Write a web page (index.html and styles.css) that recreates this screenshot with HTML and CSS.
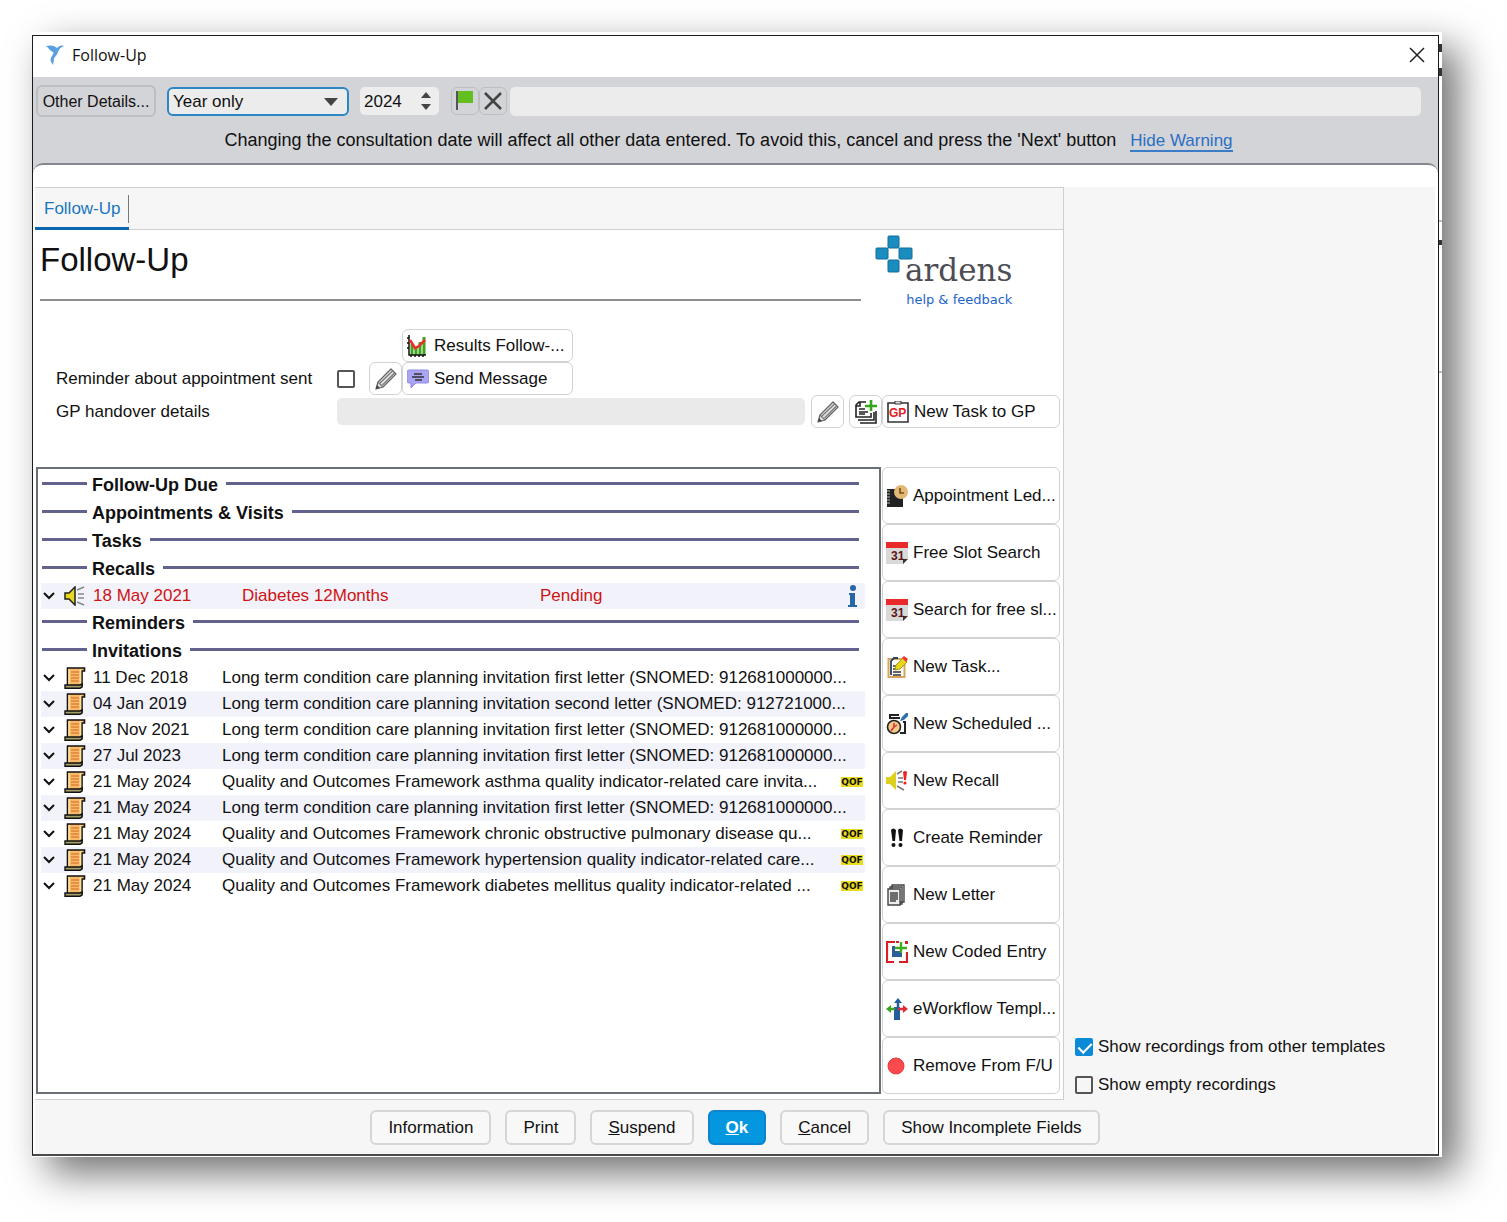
FILE: index.html
```html
<!DOCTYPE html>
<html lang="en">
<head>
<meta charset="utf-8">
<title>Follow-Up</title>
<link rel="stylesheet" href="styles.css">
</head>
<body>
<svg class="defs" aria-hidden="true">
  <symbol id="pencil" viewBox="0 0 24 24"><path d="M2 22l2-7L17 2l5 5L9 20z" fill="#e2e2e2" stroke="#666" stroke-width="1.3" stroke-linejoin="round"/><path d="M6 16L18.500 4M8.500 18L20.500 6M4 15l5 5" stroke="#777" stroke-width="1.1" fill="none"/><path d="M2 22l1-4 3 3z" fill="#444"/></symbol>
  <symbol id="chevron" viewBox="0 0 12 8"><path d="M1 1l5 5 5-5" fill="none" stroke="#111" stroke-width="2"/></symbol>
  <symbol id="scroll" viewBox="0 0 22 22"><path d="M3.500 1h17v3H18v15H3.500z" fill="#f9b96b" stroke="#111" stroke-width="1.600"/><path d="M5 2v16M16.500 2v16" stroke="#fbe29a" stroke-width="1.600"/><path d="M7 5h8M7 8h8M7 11h8M7 14h8" stroke="#e08238" stroke-width="1.300"/><path d="M1 18h15l2-1v3l-2 1.200H1z" fill="#a59f68" stroke="#111" stroke-width="1.400"/></symbol>
</svg>

<div class="shot">
<main class="window">
  <header class="titlebar">
    <svg width="18" height="20" viewBox="0 0 18 20"><path d="M0 1c4-1 8-1 11 2 2-2 4-3 7-2-3 1-5 3-6 6-1 4-4 5-4 7l-1 6c-3-4-3-6-1-9 1-2 2-3 1-4C4 6 3 3 0 1z" fill="#5a9fdf"/></svg>
    <span class="titlebar-text">Follow-Up</span>
    <button class="close" aria-label="Close"><svg width="16" height="16" viewBox="0 0 16 16"><path d="M1 1l14 14M15 1L1 15" stroke="#222" stroke-width="1.500"/></svg></button>
  </header>

  <section class="toolbar">
    <div class="toolbar-row">
      <button class="details">Other Details...</button>
      <div class="select-box">
        <select aria-label="Date precision"><option>Year only</option></select>
        <svg class="select-arrow" width="14" height="8" viewBox="0 0 14 8"><path d="M0 0h14L7 8z" fill="#444"/></svg>
      </div>
      <div class="spinner">
        <input type="text" value="2024" aria-label="Year">
        <span class="steps">
          <button aria-label="Next year"><svg width="10" height="6" viewBox="0 0 10 6"><path d="M0 6h10L5 0z" fill="#444"/></svg></button>
          <button aria-label="Previous year"><svg width="10" height="6" viewBox="0 0 10 6"><path d="M0 0h10L5 6z" fill="#444"/></svg></button>
        </span>
      </div>
      <div class="pair">
        <button class="tool" aria-label="Flag"><svg width="18" height="20" viewBox="0 0 18 20"><path d="M1 0v19" stroke="#555" stroke-width="2"/><path d="M2 0h15v12H2z" fill="#63bf1f"/></svg></button>
        <button class="tool" aria-label="Clear"><svg width="18" height="18" viewBox="0 0 18 18"><path d="M1 1l16 16M17 1L1 17" stroke="#444" stroke-width="2.500"/></svg></button>
      </div>
      <input class="comment" type="text" aria-label="Details">
    </div>
    <p class="warning">Changing the consultation date will affect all other data entered. To avoid this, cancel and press the 'Next' button <a href="#">Hide Warning</a></p>
  </section>

  <div class="body">
    <div class="columns">
      <section class="panel">
        <nav class="tabs"><a class="tab" href="#">Follow-Up</a></nav>
        <div class="heading">
          <h1>Follow-Up</h1>
          <a class="brand" href="#">
            <span class="brand-row">
              <svg width="38" height="38" viewBox="0 0 38 38" fill="#1a8dc0" stroke="#116d97"><rect x="13" y="1" width="11" height="12" rx="1"/><rect x="13" y="25" width="11" height="12" rx="1"/><rect x="1" y="13" width="12" height="11" rx="1"/><rect x="24" y="13" width="13" height="11" rx="1"/></svg>
              <span class="brand-name">ardens</span>
            </span>
            <span class="brand-help">help &amp; feedback</span>
          </a>
        </div>

        <div class="form">
          <div class="form-row results">
            <button class="btn medium"><svg width="22" height="22" viewBox="0 0 22 22"><path d="M5 20V9M9 20v-8M13 20V7M17 20V2" stroke="#3ea51d" stroke-width="3"/><path d="M2 0v20h17M4 20v2M8 20v2M12 20v2M16 20v2M0 3h2M0 8h2M0 13h2" stroke="#111" stroke-width="1.500" fill="none"/><path d="M3 5l5 8 4-2 6-6" stroke="#ee2b2b" stroke-width="2.500" fill="none"/></svg>Results Follow-...</button>
          </div>
          <div class="form-row">
            <label class="label" for="sent">Reminder about appointment sent</label>
            <input class="check" type="checkbox" id="sent">
            <button class="btn square spaced" aria-label="Edit reminder"><svg width="24" height="24"><use href="#pencil"/></svg></button>
            <button class="btn medium"><svg width="22" height="22" viewBox="0 0 22 22"><path d="M2 2h18q2 0 2 2v9q0 2-2 2H9l-5 5v-5H2q-2 0-2-2V4q0-2 2-2z" fill="#a9a5f2" stroke="#8e89e6"/><path d="M7 6h8M5 9h12M8 12h7" stroke="#333" stroke-width="1.300"/></svg>Send Message</button>
          </div>
          <div class="form-row">
            <label class="label" for="handover">GP handover details</label>
            <input class="field" type="text" id="handover">
            <button class="btn square" aria-label="Edit handover"><svg width="24" height="24"><use href="#pencil"/></svg></button>
            <button class="btn square near" aria-label="Add note"><svg width="24" height="24" viewBox="0 0 24 24" fill="none" stroke="#222" stroke-width="1.600"><path d="M12 2H5L2 5v12h15v-4M4 20h16v-8M6 23h16V11M2 6h4V2"/><path d="M5 9h6M5 12h9M5 14h6" stroke-width="1.300"/><path d="M17 0v11M11 6h12" stroke="#35a51b" stroke-width="2.600"/></svg></button>
            <button class="btn gp"><svg width="22" height="22" viewBox="0 0 22 22"><path d="M1 2h20v19H1z" fill="#fff" stroke="#333" stroke-width="1.600"/><path d="M8 0h6v3H8z" fill="#ddd" stroke="#333"/><text x="2" y="16" font-family="Liberation Sans, sans-serif" font-size="12" font-weight="700" fill="#e02020">GP</text></svg>New Task to GP</button>
          </div>
        </div>

        <div class="work">
          <div class="list">
            <h2>Follow-Up Due</h2>
            <h2>Appointments &amp; Visits</h2>
            <h2>Tasks</h2>
            <h2>Recalls</h2>
            <table class="recalls">
              <colgroup><col class="c-chev"><col class="c-icon"><col class="c-recall-date"><col class="c-recall-name"><col><col class="c-info"></colgroup>
              <tr><td><svg width="12" height="8"><use href="#chevron"/></svg></td><td><svg width="22" height="20" viewBox="0 0 22 20"><path d="M1 7h4l6-6v18l-6-6H1z" fill="#e8d820" stroke="#222" stroke-width="1.500"/><path d="M13 4l7-3M14 8h6M14 12h6M13 16l7 3" stroke="#888" stroke-width="1.500"/></svg></td><td>18 May 2021</td><td>Diabetes 12Months</td><td>Pending</td><td><svg width="10" height="22" viewBox="0 0 10 22" fill="#2767a5"><circle cx="5" cy="3" r="3"/><path d="M1 8h6v12h2v2H0v-2h2v-10H1z"/></svg></td></tr>
            </table>
            <h2>Reminders</h2>
            <h2>Invitations</h2>
            <table class="invites">
              <colgroup><col class="c-chev"><col class="c-icon"><col class="c-date"><col><col class="c-qof"></colgroup>
              <tr><td><svg width="12" height="8"><use href="#chevron"/></svg></td><td><svg width="22" height="22"><use href="#scroll"/></svg></td><td>11 Dec 2018</td><td colspan="2">Long term condition care planning invitation first letter (SNOMED: 912681000000...</td></tr>
              <tr><td><svg width="12" height="8"><use href="#chevron"/></svg></td><td><svg width="22" height="22"><use href="#scroll"/></svg></td><td>04 Jan 2019</td><td colspan="2">Long term condition care planning invitation second letter (SNOMED: 912721000...</td></tr>
              <tr><td><svg width="12" height="8"><use href="#chevron"/></svg></td><td><svg width="22" height="22"><use href="#scroll"/></svg></td><td>18 Nov 2021</td><td colspan="2">Long term condition care planning invitation first letter (SNOMED: 912681000000...</td></tr>
              <tr><td><svg width="12" height="8"><use href="#chevron"/></svg></td><td><svg width="22" height="22"><use href="#scroll"/></svg></td><td>27 Jul 2023</td><td colspan="2">Long term condition care planning invitation first letter (SNOMED: 912681000000...</td></tr>
              <tr><td><svg width="12" height="8"><use href="#chevron"/></svg></td><td><svg width="22" height="22"><use href="#scroll"/></svg></td><td>21 May 2024</td><td>Quality and Outcomes Framework asthma quality indicator-related care invita...</td><td><span class="qof">QOF</span></td></tr>
              <tr><td><svg width="12" height="8"><use href="#chevron"/></svg></td><td><svg width="22" height="22"><use href="#scroll"/></svg></td><td>21 May 2024</td><td colspan="2">Long term condition care planning invitation first letter (SNOMED: 912681000000...</td></tr>
              <tr><td><svg width="12" height="8"><use href="#chevron"/></svg></td><td><svg width="22" height="22"><use href="#scroll"/></svg></td><td>21 May 2024</td><td>Quality and Outcomes Framework chronic obstructive pulmonary disease qu...</td><td><span class="qof">QOF</span></td></tr>
              <tr><td><svg width="12" height="8"><use href="#chevron"/></svg></td><td><svg width="22" height="22"><use href="#scroll"/></svg></td><td>21 May 2024</td><td>Quality and Outcomes Framework hypertension quality indicator-related care...</td><td><span class="qof">QOF</span></td></tr>
              <tr><td><svg width="12" height="8"><use href="#chevron"/></svg></td><td><svg width="22" height="22"><use href="#scroll"/></svg></td><td>21 May 2024</td><td>Quality and Outcomes Framework diabetes mellitus quality indicator-related ...</td><td><span class="qof">QOF</span></td></tr>
            </table>
          </div>
          <div class="actions">
            <button class="btn"><svg width="22" height="22" viewBox="0 0 22 22"><path d="M1 4h16v18H1z" fill="#222"/><path d="M1 6h3M1 9h3M1 12h3M1 15h3M1 18h3" stroke="#bbb"/><circle cx="15" cy="7" r="7" fill="#e3b877"/><path d="M14 3v5h4" stroke="#7a4d18" stroke-width="1.600" fill="none"/></svg>Appointment Led...</button>
            <button class="btn"><svg width="22" height="22" viewBox="0 0 22 22"><path d="M0 0h22v17l-5 5H0z" fill="#d9d9d9"/><path d="M0 0h22v6H0z" fill="#ea2a2a"/><path d="M17 22v-5h5z" fill="#333"/><text x="5" y="18" font-family="Liberation Sans, sans-serif" font-size="12" font-weight="700" fill="#5b1515">31</text></svg>Free Slot Search</button>
            <button class="btn"><svg width="22" height="22" viewBox="0 0 22 22"><path d="M0 0h22v17l-5 5H0z" fill="#d9d9d9"/><path d="M0 0h22v6H0z" fill="#ea2a2a"/><path d="M17 22v-5h5z" fill="#333"/><text x="5" y="18" font-family="Liberation Sans, sans-serif" font-size="12" font-weight="700" fill="#5b1515">31</text></svg>Search for free sl...</button>
            <button class="btn"><svg width="22" height="22" viewBox="0 0 22 22"><path d="M2.500 3h16v18h-16z" fill="#fff" stroke="#d8a55b" stroke-width="2"/><path d="M5 19V5l3-3h4" fill="none" stroke="#28435f" stroke-width="1.800"/><path d="M7 10h4M7 13h3M7 16h8M7 19h8" stroke="#333" stroke-width="1.500"/><path d="M9 14l1-5 7-7 4 4-7 7z" fill="#e6d71b" stroke="#aa9b10"/><path d="M16 2l2-2 4 3-2 3z" fill="#e33"/></svg>New Task...</button>
            <button class="btn"><svg width="22" height="22" viewBox="0 0 22 22"><path d="M4 6V2h9M17 9h2v11h-5" fill="none" stroke="#222" stroke-width="2"/><path d="M4 5h10" stroke="#222" stroke-width="2"/><path d="M14 8l2-4 4-4h2v3l-4 4z" fill="#2e6fae"/><circle cx="8" cy="14" r="6.500" fill="#f3c98c" stroke="#222" stroke-width="1.600"/><path d="M8 10v4l-3 4M8 14l3-2" stroke="#e02b2b" stroke-width="1.500" fill="none"/></svg>New Scheduled ...</button>
            <button class="btn"><svg width="22" height="22" viewBox="0 0 22 22"><path d="M0 7h4l6-6v19l-6-6H0z" fill="#ddcf1e"/><path d="M11 4l5-3M12 8h5M12 12h5M11 16l7 4" stroke="#777" stroke-width="1.500"/><path d="M17 2q2-2 4 0l-1 8h-2z" fill="#e22"/><circle cx="19" cy="13" r="1.600" fill="#e22"/></svg>New Recall</button>
            <button class="btn"><svg width="22" height="22" viewBox="0 0 22 22"><path d="M5 3q2-3 5 0l-1 11H6.500zM12 3q2-3 5 0l-1 11h-2.500z" fill="#111"/><circle cx="7.500" cy="18" r="2" fill="#111"/><circle cx="14.500" cy="18" r="2" fill="#111"/></svg>Create Reminder</button>
            <button class="btn"><svg width="22" height="22" viewBox="0 0 22 22" fill="#eee" stroke="#444" stroke-width="1.400"><path d="M6 1h12v17H6zM4 3h12v17H4z"/><path d="M2 5h12v16H2z"/><path d="M4 9h8M4 11h8M4 13h8M4 15h8M4 17h6"/></svg>New Letter</button>
            <button class="btn"><svg width="22" height="22" viewBox="0 0 22 22"><path d="M9 1H1v20h7M13 21h8V11M10 1h3" fill="none" stroke="#d81f26" stroke-width="2.200"/><path d="M19 0h3v3h-3z" fill="#d81f26"/><path d="M6 5h3v5h7v6H6z" fill="#2d5f9a"/><path d="M15 1v11M9 7h12" stroke="#43ab1e" stroke-width="2.400"/></svg>New Coded Entry</button>
            <button class="btn"><svg width="22" height="22" viewBox="0 0 22 22"><path d="M11 22V9" stroke="#255e9c" stroke-width="6"/><path d="M12 10V4" stroke="#255e9c" stroke-width="2.500"/><path d="M8 5l4-5 4 5z" fill="#255e9c"/><path d="M9 11H3" stroke="#3da322" stroke-width="2.500"/><path d="M5 7v8l-5-4z" fill="#3da322"/><path d="M12 11h6" stroke="#dd2b35" stroke-width="2.500"/><path d="M17 7v8l5-4z" fill="#dd2b35"/></svg>eWorkflow Templ...</button>
            <button class="btn"><svg width="22" height="22" viewBox="0 0 22 22"><circle cx="10" cy="11" r="8" fill="#fb4a4d" stroke="#e23a3d"/></svg>Remove From F/U</button>
          </div>
        </div>
      </section>

      <aside class="side">
        <label><input class="check" type="checkbox" checked>Show recordings from other templates</label>
        <label><input class="check" type="checkbox">Show empty recordings</label>
      </aside>
    </div>
    <footer class="footer">
      <button>Information</button>
      <button>Print</button>
      <button><u>S</u>uspend</button>
      <button class="primary"><u>O</u>k</button>
      <button><u>C</u>ancel</button>
      <button>Show Incomplete Fields</button>
    </footer>
  </div>
</main>
</div>
</body>
</html>
```
FILE: styles.css
```css
* { box-sizing: border-box; }

body {
  margin: 0;
  padding: 32px 65px 65px 32px;
  background: #fff;
  color: #111;
  font: 17px/20px "Liberation Sans", Arial, sans-serif;
}

button, input, select { font: inherit; color: inherit; }
button { cursor: pointer; white-space: nowrap; }
svg { display: block; flex: none; }
.defs { position: absolute; width: 0; height: 0; }

/* Slivers of the application behind the dialog show along the right edge */
.shot {
  padding: 3px 3px 1px 0;
  background:
    linear-gradient(#333, #333) right 12px / 3px 8px no-repeat,
    linear-gradient(#333, #333) right 36px / 3px 8px no-repeat,
    linear-gradient(#bbb, #bbb) right 188px / 3px 2px no-repeat,
    linear-gradient(#333, #333) right 208px / 3px 5px no-repeat,
    linear-gradient(#bbb, #bbb) right 339px / 3px 2px no-repeat,
    #fff;
  box-shadow: 16px 16px 37px rgba(0, 0, 0, .56);
}

.window {
  border: 1px solid #1c1c1c;
  border-bottom: 2px solid #4a4a4a;
  background: #d3d4d8;
}

/* Title bar */
.titlebar {
  display: flex;
  align-items: center;
  height: 41px;
  padding: 0 13px 3px;
  background: #fff;
}
.titlebar-text {
  flex: 1;
  margin-left: 8px;
  font: 16px/20px "Open Sans", "Noto Sans", sans-serif;
}
.close { padding: 0; border: 0; background: none; }

/* Date toolbar */
.toolbar { height: 86px; padding: 9px 17px 0 3px; }
.toolbar-row { display: flex; align-items: center; height: 30px; }
.details {
  width: 120px;
  height: 32px;
  padding: 2px 0 0;
  border: 2px solid #bdbec2;
  border-radius: 6px;
  background: none;
  font-size: 16px;
}
.select-box { position: relative; width: 182px; margin-left: 11px; }
.select-box select {
  display: block;
  width: 100%;
  height: 29px;
  padding: 1px 4px 0;
  border: 2px solid #2c86c4;
  border-radius: 6px;
  background: #ececec;
  appearance: none;
}
.select-arrow { position: absolute; top: 11px; right: 11px; pointer-events: none; }
.spinner {
  display: flex;
  align-items: center;
  width: 79px;
  height: 28px;
  margin-left: 11px;
  padding: 0 8px 0 4px;
  border-radius: 5px;
  background: #ededed;
}
.spinner input { flex: 1; min-width: 0; padding: 1px 0 0; border: 0; background: none; }
.steps { display: grid; gap: 6px; }
.steps button { padding: 0; border: 0; background: none; }
.pair { display: flex; margin: 0 3px 0 12px; }
.tool {
  display: grid;
  place-items: center;
  width: 28px;
  height: 28px;
  padding: 0;
  border: 1px solid #bdbec2;
  border-radius: 6px;
  background: none;
}
.comment {
  flex: 1;
  min-width: 0;
  height: 29px;
  border: 0;
  border-radius: 5px;
  background: #ececec;
}
.warning {
  margin: 14px 0 0;
  font-size: 18px;
  text-align: center;
}
.warning a {
  margin-left: 9px;
  border-bottom: 2px solid #3a7cc8;
  color: #2a6fc4;
  font-size: 17px;
  text-decoration: none;
}

/* Body */
.body {
  padding: 22px 3px 0 2px;
  border-top: 2px solid #87888f;
  border-radius: 10px 10px 0 0;
  background: #fff;
}
.columns { display: grid; grid-template-columns: minmax(0, 1fr) 371px; }
.panel {
  border: 1px solid #cdced2;
  border-left: 0;
  background: #fff;
}

.tabs {
  display: flex;
  height: 42px;
  border-bottom: 1px solid #cdced2;
  background: #f6f6f6;
}
.tab {
  position: relative;
  height: 42px;
  padding: 11px 8px 0 9px;
  border-bottom: 3px solid #0a66b0;
  color: #1a76c0;
  text-decoration: none;
}
.tab::after {
  content: "";
  position: absolute;
  top: 7px;
  right: 0;
  width: 1px;
  height: 28px;
  background: #777;
}

.heading {
  display: grid;
  grid-template-columns: minmax(0, 1fr) 202px;
  align-items: start;
  height: 78px;
  padding-left: 5px;
}
.heading h1 {
  margin: 0;
  padding-bottom: 9px;
  border-bottom: 2px solid #8f8f8f;
  font-size: 33px;
  font-weight: 400;
  line-height: 60px;
}
.brand {
  justify-self: start;
  display: grid;
  justify-items: end;
  padding: 5px 0 0 14px;
  text-decoration: none;
}
.brand-row { display: flex; align-items: flex-start; }
.brand-name {
  margin: 17px 0 0 -8px;
  color: #4d4d55;
  font: 31px/36px "DejaVu Serif", serif;
}
.brand-help { color: #1c63c8; font: 13px/24px "DejaVu Sans", sans-serif; }

/* Form */
.form { padding: 21px 3px 0 21px; }
.form-row { display: flex; align-items: center; height: 33px; }
.results { padding-left: 346px; }
.label { flex: none; width: 281px; }
.check {
  position: relative;
  flex: none;
  width: 18px;
  height: 18px;
  margin: 0;
  border: 2px solid #555;
  border-radius: 2px;
  appearance: none;
}
.check:checked { border-color: #0b8ad8; background: #0b8ad8; }
.check:checked::after {
  content: "";
  position: absolute;
  top: 0;
  left: 4px;
  width: 6px;
  height: 11px;
  border: solid #fff;
  border-width: 0 2px 2px 0;
  transform: rotate(45deg);
}
.field {
  flex: 1;
  min-width: 0;
  height: 27px;
  margin-right: 6px;
  border: 0;
  border-radius: 5px;
  background: #eaeaea;
}
.btn {
  display: flex;
  align-items: center;
  gap: 5px;
  min-width: 0;
  padding: 0 0 0 4px;
  border: 1px solid #d2d2d2;
  border-radius: 6px;
  background: #fff;
}
.form .btn { height: 33px; }
.form .medium { width: 171px; }
.form .square { justify-content: center; width: 33px; padding: 0; }
.form .spaced { margin-left: 14px; }
.form .near { margin-left: 5px; }
.form .gp { width: 178px; }

/* List and actions */
.work {
  display: grid;
  grid-template-columns: minmax(0, 1fr) 178px;
  gap: 1px;
  margin-top: 39px;
  padding: 0 3px 5px 1px;
}
.list {
  min-width: 0;
  padding: 2px 14px 0 3px;
  border: 2px solid #6a6e77;
}
.list h2 {
  display: flex;
  align-items: center;
  gap: 5px;
  height: 28px;
  margin: 0;
  padding: 0 6px 0 1px;
  font-size: 18px;
  line-height: 28px;
}
.list h2::before, .list h2::after {
  content: "";
  width: 45px;
  height: 3px;
  margin-bottom: 3px;
  background: #62628e;
}
.list h2::after { flex: 1; margin-left: 3px; }
.list table { width: 100%; table-layout: fixed; border-collapse: collapse; }
.list td { height: 26px; padding: 0; white-space: nowrap; }
.list td:first-child { padding-left: 2px; }
.c-chev { width: 23px; }
.c-icon { width: 29px; }
.c-date { width: 129px; }
.c-recall-date { width: 149px; }
.c-recall-name { width: 298px; }
.c-info { width: 17px; }
.c-qof { width: 24px; }
.recalls { color: #cf1212; }
.recalls tr, .invites tr:nth-child(even) { background: #f2f2fb; }
.qof {
  display: block;
  width: 22px;
  background: #e9dc1c;
  font: 700 9px/10px "DejaVu Sans", sans-serif;
  text-align: center;
}

.actions { display: grid; grid-auto-rows: 57px; }
.actions .btn { padding-left: 3px; }

/* Right column */
.side {
  display: flex;
  flex-direction: column;
  justify-content: flex-end;
  gap: 18px;
  padding: 0 11px 5px;
  background: #f6f6f6;
}
.side label { display: flex; align-items: center; gap: 5px; }

/* Footer */
.footer {
  display: flex;
  justify-content: center;
  gap: 14px;
  padding: 10px 0 9px;
  background: #f6f6f6;
}
.footer button {
  height: 35px;
  padding: 0 16px;
  border: 2px solid #d6d6d6;
  border-radius: 6px;
  background: #f8f8f8;
}
.footer .primary {
  border-color: #0a84d0;
  background: #0596e0;
  color: #fff;
  font-weight: 700;
}
```
